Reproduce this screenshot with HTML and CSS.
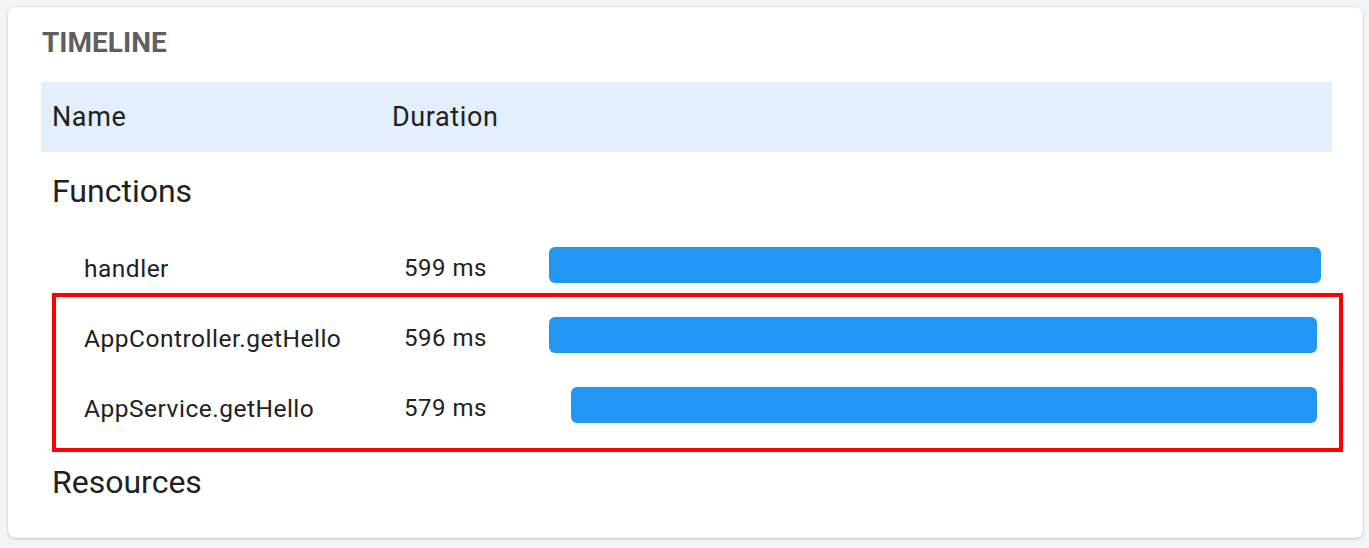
FILE: index.html
```html
<!DOCTYPE html>
<html lang="en">
<head>
<meta charset="utf-8">
<title>Timeline</title>
<link rel="stylesheet" href="styles.css">
</head>
<body>
<div class="page">
  <section class="card">
    <h2 class="card-title">TIMELINE</h2>
    <div class="table">
      <div class="head-row">
        <div class="head-name">Name</div>
        <div class="head-duration">Duration</div>
        <div></div>
      </div>
      <div class="section-title">Functions</div>
      <div class="row">
        <div class="cell-name">handler</div>
        <div class="cell-duration">599 ms</div>
        <div class="track"><div class="bar" style="margin-left:0px;width:772px"></div></div>
      </div>
      <div class="row">
        <div class="cell-name">AppController.getHello</div>
        <div class="cell-duration">596 ms</div>
        <div class="track"><div class="bar" style="margin-left:0px;width:768px"></div></div>
      </div>
      <div class="row">
        <div class="cell-name">AppService.getHello</div>
        <div class="cell-duration">579 ms</div>
        <div class="track"><div class="bar" style="margin-left:22px;width:746px"></div></div>
      </div>
      <div class="section-title section-last">Resources</div>
    </div>
    <div class="highlight"></div>
  </section>
</div>
</body>
</html>
```

FILE: styles.css
```css
html, body {
  margin: 0;
  padding: 0;
  background: #f3f4f6;
}
body {
  font-family: Roboto, "Noto Sans", Arial, sans-serif;
  color: #212121;
}
.page {
  padding: 7px 6px 10px 8px;
}
.card {
  position: relative;
  background: #ffffff;
  border-radius: 8px;
  box-shadow: 0 1px 3px rgba(0, 0, 0, 0.18), 0 0 0 1px rgba(0, 0, 0, 0.03);
  padding: 19px 31px 14px 33px;
}
.card-title {
  margin: 0 0 22px 1px;
  font-size: 28px;
  line-height: 34px;
  font-weight: 700;
  color: #5f5f5f;
}
.table {
  display: flex;
  flex-direction: column;
}
.head-row,
.row {
  display: grid;
  grid-template-columns: 351px 157px 772px 1fr;
  align-items: center;
}
.head-row {
  height: 70px;
  background: #e3effd;
  font-size: 27px;
  letter-spacing: 0.6px;
}
.head-name {
  padding-left: 11px;
}
.section-title {
  padding-left: 11px;
  font-size: 32px;
  line-height: 78px;
}
.section-last {
  line-height: 84px;
}
.row {
  height: 70px;
}
.cell-name,
.cell-duration {
  line-height: 29px;
  padding-top: 7px;
  white-space: nowrap;
  letter-spacing: 0.5px;
}
.cell-name {
  font-size: 24.5px;
  padding-left: 43px;
}
.cell-duration {
  font-size: 24px;
  padding-left: 12px;
}
.track {
  display: flex;
}
.bar {
  height: 36px;
  background: #2196f3;
  border-radius: 6px;
}
.highlight {
  position: absolute;
  left: 44px;
  top: 286px;
  width: 1283px;
  height: 151px;
  border: 4px solid #ff0000;
  pointer-events: none;
}
```
